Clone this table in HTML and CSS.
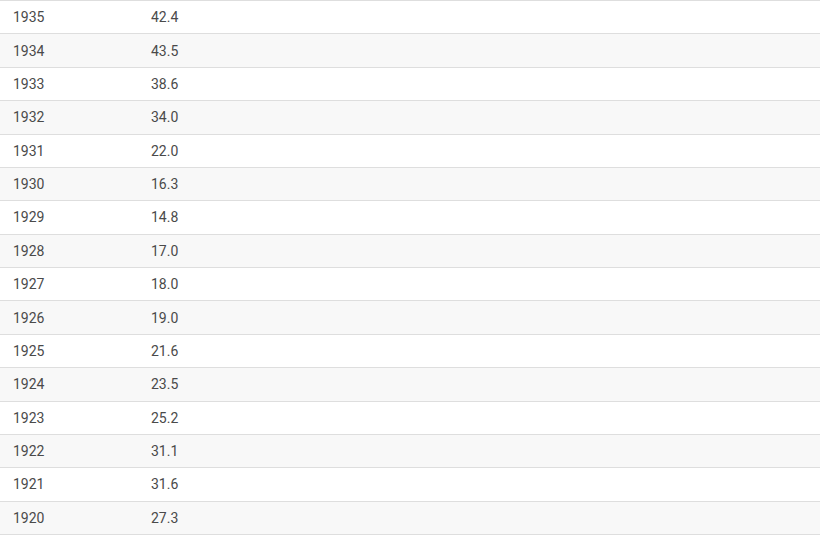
FILE: index.html
```html
<!DOCTYPE html>
<html>
<head>
<meta charset="utf-8">
<link rel="stylesheet" href="styles.css">
</head>
<body>
<div class="table">
  <div class="row"><span class="year">1935</span><span class="val">42.4</span></div>
  <div class="row"><span class="year">1934</span><span class="val">43.5</span></div>
  <div class="row"><span class="year">1933</span><span class="val">38.6</span></div>
  <div class="row"><span class="year">1932</span><span class="val">34.0</span></div>
  <div class="row"><span class="year">1931</span><span class="val">22.0</span></div>
  <div class="row"><span class="year">1930</span><span class="val">16.3</span></div>
  <div class="row"><span class="year">1929</span><span class="val">14.8</span></div>
  <div class="row"><span class="year">1928</span><span class="val">17.0</span></div>
  <div class="row"><span class="year">1927</span><span class="val">18.0</span></div>
  <div class="row"><span class="year">1926</span><span class="val">19.0</span></div>
  <div class="row"><span class="year">1925</span><span class="val">21.6</span></div>
  <div class="row"><span class="year">1924</span><span class="val">23.5</span></div>
  <div class="row"><span class="year">1923</span><span class="val">25.2</span></div>
  <div class="row"><span class="year">1922</span><span class="val">31.1</span></div>
  <div class="row"><span class="year">1921</span><span class="val">31.6</span></div>
  <div class="row"><span class="year">1920</span><span class="val">27.3</span></div>
</div>
</body>
</html>
```
FILE: styles.css
```css
html, body {
  margin: 0;
  padding: 0;
  background: #ffffff;
}
.table {
  width: 820px;
  display: flex;
  flex-direction: column;
  font-family: Roboto, "Liberation Sans", sans-serif;
  font-size: 14px;
  color: #4a4a4a;
}
.row {
  display: flex;
  align-items: center;
  height: 33.375px;
  box-sizing: border-box;
  border-top: 1px solid #dedede;
  background: #ffffff;
}
.row:last-child {
  border-bottom: 1px solid #dedede;
  height: 34.375px;
}
.row:nth-child(even) {
  background: #f8f8f8;
}
.year {
  width: 151px;
  padding-left: 13px;
  box-sizing: border-box;
}
.val {
  padding-left: 0;
}
```
